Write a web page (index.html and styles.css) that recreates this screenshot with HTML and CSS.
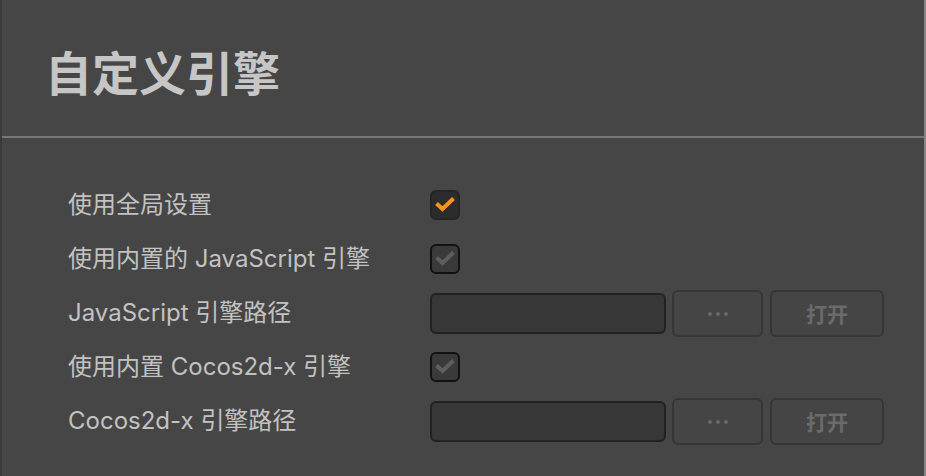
FILE: index.html
```html
<!DOCTYPE html>
<html lang="zh-CN">
<head>
<meta charset="utf-8">
<title>自定义引擎</title>
<link rel="stylesheet" href="styles.css">
</head>
<body>
<div class="frame">
  <div class="edge-left"></div>
  <main class="panel">
    <header class="header">
      <h1 class="title">自定义引擎</h1>
    </header>
    <section class="rows">
      <div class="row">
        <span class="label">使用全局设置</span>
        <div class="controls">
          <span class="checkbox checkbox-on">
            <svg viewBox="0 0 30 30" width="30" height="30"><path d="M6.5 13.5 L12.5 19 L23.5 8.5" fill="none" stroke="#f7931e" stroke-width="4" stroke-linejoin="miter" stroke-linecap="butt"/></svg>
          </span>
        </div>
      </div>
      <div class="row">
        <span class="label">使用内置的 JavaScript 引擎</span>
        <div class="controls">
          <span class="checkbox checkbox-dim">
            <svg viewBox="0 0 30 30" width="30" height="30"><path d="M6.5 13.5 L12.5 19 L23.5 8.5" fill="none" stroke="#5e5e5e" stroke-width="4" stroke-linejoin="miter" stroke-linecap="butt"/></svg>
          </span>
        </div>
      </div>
      <div class="row">
        <span class="label">JavaScript 引擎路径</span>
        <div class="controls">
          <span class="input"></span>
          <span class="btn btn-dots"><svg viewBox="0 0 20 4" width="20" height="4"><circle cx="2" cy="2" r="1.8" fill="#717171"/><circle cx="10" cy="2" r="1.8" fill="#717171"/><circle cx="18" cy="2" r="1.8" fill="#717171"/></svg></span>
          <span class="btn btn-open">打开</span>
        </div>
      </div>
      <div class="row">
        <span class="label">使用内置 Cocos2d-x 引擎</span>
        <div class="controls">
          <span class="checkbox checkbox-dim">
            <svg viewBox="0 0 30 30" width="30" height="30"><path d="M6.5 13.5 L12.5 19 L23.5 8.5" fill="none" stroke="#5e5e5e" stroke-width="4" stroke-linejoin="miter" stroke-linecap="butt"/></svg>
          </span>
        </div>
      </div>
      <div class="row">
        <span class="label">Cocos2d-x 引擎路径</span>
        <div class="controls">
          <span class="input"></span>
          <span class="btn btn-dots"><svg viewBox="0 0 20 4" width="20" height="4"><circle cx="2" cy="2" r="1.8" fill="#717171"/><circle cx="10" cy="2" r="1.8" fill="#717171"/><circle cx="18" cy="2" r="1.8" fill="#717171"/></svg></span>
          <span class="btn btn-open">打开</span>
        </div>
      </div>
    </section>
  </main>
  <div class="edge-right"></div>
</div>
</body>
</html>
```
FILE: styles.css
```css
html, body {
  margin: 0;
  padding: 0;
  height: 100%;
  background: #464646;
}
body {
  font-family: Inter, "Noto Sans CJK SC", sans-serif;
  color: #c2c2c2;
  overflow: hidden;
}
.frame {
  display: flex;
  height: 476px;
  width: 926px;
}
.edge-left {
  width: 2px;
  background: #3b3b3b;
}
.edge-right {
  width: 2px;
  background: #868686;
}
.panel {
  flex: 1;
  display: flex;
  flex-direction: column;
}
.header {
  height: 138px;
  box-sizing: border-box;
  border-bottom: 2px solid #777777;
  display: flex;
  align-items: center;
  padding: 4px 0 0 43px;
}
.title {
  margin: 0;
  font-family: "Noto Sans CJK SC", sans-serif;
  font-weight: 700;
  font-size: 47px;
  line-height: 1;
  color: #c6c6c6;
}
.rows {
  padding: 40px 0 0 66px;
  display: flex;
  flex-direction: column;
}
.row {
  height: 54px;
  display: grid;
  grid-template-columns: 362px auto;
  align-items: center;
}
.label {
  font-size: 24px;
  line-height: 1;
  color: #c2c2c2;
  white-space: nowrap;
}
.controls {
  display: flex;
  align-items: center;
}
.checkbox {
  width: 30px;
  height: 30px;
  box-sizing: border-box;
  border-radius: 6px;
  display: flex;
  align-items: center;
  justify-content: center;
  overflow: hidden;
}
.checkbox svg {
  display: block;
  flex: none;
}
.checkbox-on {
  background: #2c2c2c;
  border: 2px solid #252525;
}
.checkbox-dim {
  background: #3a3a3a;
  border: 2px solid #121212;
}
.input {
  width: 236px;
  height: 41px;
  box-sizing: border-box;
  background: #373737;
  border: 2px solid #222222;
  border-radius: 6px;
}
.btn {
  height: 47px;
  box-sizing: border-box;
  border: 2px solid #363636;
  border-radius: 6px;
  background: #454545;
  display: flex;
  align-items: center;
  justify-content: center;
}
.btn-dots {
  width: 91px;
  margin-left: 6px;
}
.btn-dots svg {
  display: block;
  margin-top: 2px;
}
.btn-open {
  width: 114px;
  margin-left: 7px;
  font-family: "Noto Sans CJK SC", sans-serif;
  font-weight: 700;
  font-size: 21px;
  color: #6b6b6b;
}
```
